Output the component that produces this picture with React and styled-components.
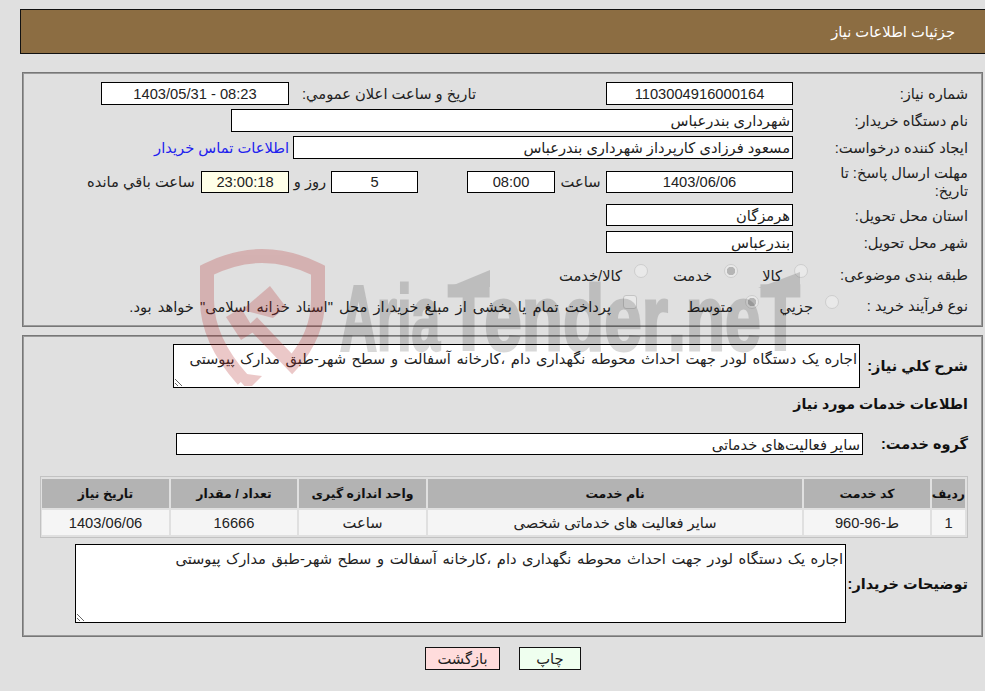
import styled, { createGlobalStyle } from "styled-components";

const GlobalStyle = createGlobalStyle`
    html, body {
        margin: 0;
        background: #E0E0E0;
    }
    * {
        box-sizing: border-box;
    }
`

export default function App () {
    return (
        <>
        <GlobalStyle/>
        <Page>
            <Header>جزئیات اطلاعات نیاز</Header>

            <InfoPanel>
                <Row>
                    <Label>شماره نیاز:</Label>
                    <Field $w={187} $center>1103004916000164</Field>
                    <SideLabel $push={130}>تاریخ و ساعت اعلان عمومي:</SideLabel>
                    <Field $w={188} $center>08:23 - 1403/05/31</Field>
                </Row>
                <Row>
                    <Label>نام دستگاه خریدار:</Label>
                    <Field $w={562}>شهرداری بندرعباس</Field>
                </Row>
                <Row>
                    <Label>ایجاد کننده درخواست:</Label>
                    <Field $w={500}>مسعود فرزادی کارپرداز شهرداری بندرعباس</Field>
                    <ContactLink href="#">اطلاعات تماس خریدار</ContactLink>
                </Row>
                <DeadlineRow>
                    <Label>مهلت ارسال پاسخ: تا<br/>تاریخ:</Label>
                    <Field $w={187} $h={22} $center>1403/06/06</Field>
                    <Hint $w={51}>ساعت</Hint>
                    <Field $w={88} $h={22} $center>08:00</Field>
                    <Spacer $w={49}/>
                    <Field $w={87} $h={22} $center>5</Field>
                    <Hint $w={42}>روز و</Hint>
                    <Field $w={88} $h={22} $center $tint>23:00:18</Field>
                    <Hint $w={120}>ساعت باقي مانده</Hint>
                </DeadlineRow>
                <Row>
                    <Label>استان محل تحویل:</Label>
                    <Field $w={187} $h={22}>هرمزگان</Field>
                </Row>
                <Row>
                    <Label>شهر محل تحویل:</Label>
                    <Field $w={187} $h={22}>بندرعباس</Field>
                </Row>
                <OptionRow $h={30}>
                    <Label $w={160}>طبقه بندی موضوعی:</Label>
                    <Option $w={70}><Radio type="radio" disabled/>کالا</Option>
                    <Option $w={90}><Radio type="radio" disabled defaultChecked/>خدمت</Option>
                    <Option $w={100}><Radio type="radio" disabled/>کالا/خدمت</Option>
                </OptionRow>
                <OptionRow $h={24}>
                    <Label $w={129}>نوع فرآیند خرید :</Label>
                    <Option $w={80}><Radio type="radio" disabled/>جزیي</Option>
                    <Option $w={122}><Radio type="radio" disabled defaultChecked/>متوسط</Option>
                    <Option>
                        <Check type="checkbox" disabled/>
                        <Note>پرداخت تمام یا بخشی از مبلغ خرید،از محل "اسناد خزانه اسلامی" خواهد بود.</Note>
                    </Option>
                </OptionRow>
            </InfoPanel>

            <DetailPanel>
                <TextRow>
                    <StrongLabel $w={108}>شرح کلي نیاز:</StrongLabel>
                    <Description $w={687} $h={44} readOnly defaultValue="اجاره یک دستگاه لودر جهت احداث محوطه نگهداری دام ،کارخانه آسفالت و سطح شهر-طبق مدارک پیوستی"/>
                </TextRow>
                <SectionTitle>اطلاعات خدمات مورد نیاز</SectionTitle>
                <GroupRow>
                    <StrongLabel $w={105}>گروه خدمت:</StrongLabel>
                    <Field $w={687} $h={22}>سایر فعالیت‌های خدماتی</Field>
                </GroupRow>
                <TableFrame>
                    <ServicesTable>
                        <colgroup>
                            <col width="33"/>
                            <col width="126"/>
                            <col width="374"/>
                            <col width="127"/>
                            <col width="126"/>
                            <col width="127"/>
                        </colgroup>
                        <thead>
                            <tr>
                                <th>ردیف</th>
                                <th>کد خدمت</th>
                                <th>نام خدمت</th>
                                <th>واحد اندازه گیری</th>
                                <th>تعداد / مقدار</th>
                                <th>تاریخ نیاز</th>
                            </tr>
                        </thead>
                        <tbody>
                            <tr>
                                <td>1</td>
                                <td>ط-96-960</td>
                                <td>سایر فعالیت های خدماتی شخصی</td>
                                <td>ساعت</td>
                                <td>16666</td>
                                <td>1403/06/06</td>
                            </tr>
                        </tbody>
                    </ServicesTable>
                </TableFrame>
                <BuyerRow>
                    <StrongLabel $w={122}>توضیحات خریدار:</StrongLabel>
                    <Description $w={771} $h={79} readOnly defaultValue="اجاره یک دستگاه لودر جهت احداث محوطه نگهداری دام ،کارخانه آسفالت و سطح شهر-طبق مدارک پیوستی"/>
                </BuyerRow>
            </DetailPanel>

            <Actions>
                <ActionButton $bg="#EFFFEF" $w={62}>چاپ</ActionButton>
                <ActionButton $bg="#FFDCDC" $w={75}>بازگشت</ActionButton>
            </Actions>

            <Watermark viewBox="0 0 985 386" aria-hidden="true">
                <ShieldGroup>
                    <Shield d="M252 322 L292 364 Q318 335 318 300 L318 270 Q290 256 262 256 Q235 256 207 270 L207 300 Q207 340 243 380"/>
                    <polygon points="232,372 262,376 248,390"/>
                    <polygon points="242,310 270,286 286,307 273,318"/>
                    <polygon points="226,317 241,308 255,331 241,340"/>
                </ShieldGroup>
                <BrandGroup>
                    <Brand x="340" y="350" textLength="100" lengthAdjust="spacingAndGlyphs">Aria</Brand>
                    <Brand x="448" y="350" textLength="220" lengthAdjust="spacingAndGlyphs">Tender</Brand>
                    <Brand x="668" y="350" textLength="132" lengthAdjust="spacingAndGlyphs">.neT</Brand>
                    <polygon points="449,287 490,270 490,287"/>
                    <polygon points="758,288 800,272 800,288"/>
                </BrandGroup>
            </Watermark>
        </Page>
        </>
    )
}

const Page = styled.div`
    position: relative;
    direction: rtl;
    width: 985px;
    height: 691px;
    padding-top: 9px;
    overflow: hidden;
    font-family: "Liberation Sans", "DejaVu Sans", sans-serif;
    font-size: 14.7px;
    color: #222222;
`
const Header = styled.div`
    display: flex;
    align-items: center;
    height: 45px;
    margin-left: 20px;
    padding: 0 30px 0 0;
    background: #8C6D42;
    border: 1px solid #111111;
    border-right: none;
    color: #FFFFFF;
`
const InfoPanel = styled.div`
    display: flex;
    flex-direction: column;
    gap: 4px;
    height: 255px;
    margin: 18px 2px 0 22px;
    padding: 9px 14px 0 0;
    border: 1px solid #777777;
    box-shadow: 0 0 0 1px #9A9A9A inset;
`
const Row = styled.div`
    display: flex;
    align-items: center;
    height: 23px;
`
const Label = styled.div`
    flex: none;
    width: ${p => p.$w || 175}px;
    line-height: 18px;
    white-space: nowrap;
`
const SideLabel = styled.div`
    flex: none;
    width: 187px;
    margin-right: ${p => p.$push}px;
    white-space: nowrap;
`
const Hint = styled.div`
    flex: none;
    width: ${p => p.$w}px;
    text-align: center;
    white-space: nowrap;
`
const Spacer = styled.div`
    flex: none;
    width: ${p => p.$w}px;
`
const Field = styled.div`
    flex: none;
    align-self: flex-start;
    display: flex;
    align-items: center;
    justify-content: ${p => p.$center ? "center" : "flex-start"};
    width: ${p => p.$w}px;
    height: ${p => p.$h || 23}px;
    padding: 0 2px;
    overflow: hidden;
    background: ${p => p.$tint ? "#FFFFE8" : "#FFFFFF"};
    border: 1px solid #000000;
    white-space: nowrap;
`
const DeadlineRow = styled(Row)`
    height: 37px;
    ${Field} {
        align-self: center;
    }
`
const OptionRow = styled(Row)`
    height: ${p => p.$h}px;
    padding-top: 4px;
`
const ContactLink = styled.a`
    margin-right: 4px;
    color: #2222EE;
    text-decoration: none;
    white-space: nowrap;
`
const Option = styled.label`
    flex: none;
    display: flex;
    align-items: center;
    width: ${p => p.$w ? `${p.$w}px` : "auto"};
    gap: 12px;
    white-space: nowrap;
`
const Note = styled.span`
    word-spacing: 2px;
`
const Radio = styled.input`
    appearance: none;
    flex: none;
    width: 14px;
    height: 14px;
    margin: -8px 0 0 0;
    background: #E9E9E9;
    border: 1px solid #CDCDCD;
    border-radius: 50%;
    &:checked {
        background: radial-gradient(circle, #B5B5B5 0 4px, #E9E9E9 4.5px);
    }
`
const Check = styled.input`
    appearance: none;
    flex: none;
    width: 14px;
    height: 14px;
    margin: -8px 0 0 0;
    background: #E9E9E9;
    border: 1px solid #C4C4C4;
    border-radius: 3px;
`
const DetailPanel = styled.div`
    height: 302px;
    margin: 8px 2px 0 22px;
    padding: 8px 14px 0 0;
    border: 1px solid #777777;
    box-shadow: 0 0 0 1px #9A9A9A inset;
`
const TextRow = styled.div`
    display: flex;
    align-items: center;
`
const StrongLabel = styled.div`
    flex: none;
    width: ${p => p.$w}px;
    font-size: 14.5px;
    font-weight: bold;
    color: #111111;
    white-space: nowrap;
`
const Description = styled.textarea`
    display: block;
    flex: none;
    width: ${p => p.$w}px;
    height: ${p => p.$h}px;
    padding: 5px 2px 2px;
    background: #FFFFFF;
    border: 1px solid #000000;
    border-radius: 0;
    outline: none;
    font: inherit;
    word-spacing: 1.5px;
    color: inherit;
`
const SectionTitle = styled.div`
    margin-top: 6px;
    height: 22px;
    line-height: 20px;
    font-size: 14.2px;
    font-weight: bold;
    color: #111111;
`
const GroupRow = styled(TextRow)`
    margin-top: 17px;
    ${Field} {
        align-self: center;
    }
`
const TableFrame = styled.div`
    width: 928px;
    margin-top: 21px;
    border: 1px solid #C2C2C2;
`
const ServicesTable = styled.table`
    width: 100%;
    table-layout: fixed;
    border-collapse: separate;
    border-spacing: 2px;
    text-align: center;
    th {
        height: 29px;
        padding: 0;
        background: #B3B3B3;
        font-size: 12.5px;
        color: #111111;
    }
    td {
        height: 25px;
        padding: 0;
        background: #F5F5F5;
    }
`
const BuyerRow = styled(TextRow)`
    margin-top: 6px;
`
const Actions = styled.div`
    display: flex;
    justify-content: center;
    gap: 19px;
    margin: 10px 0 0 21px;
`
const ActionButton = styled.button`
    width: ${p => p.$w}px;
    height: 23px;
    padding: 0;
    background: ${p => p.$bg};
    border: 1px solid #111111;
    border-radius: 0;
    font: inherit;
    color: inherit;
`
const Watermark = styled.svg`
    position: absolute;
    top: 0;
    left: 0;
    width: 985px;
    height: 386px;
    pointer-events: none;
`
const ShieldGroup = styled.g`
    fill: #B42828;
    opacity: 0.25;
`
const Shield = styled.path`
    fill: none;
    stroke: #B42828;
    stroke-width: 14;
`
const BrandGroup = styled.g`
    fill: #000000;
    opacity: 0.15;
`
const Brand = styled.text`
    direction: ltr;
    font-family: "Liberation Sans", sans-serif;
    font-size: 92px;
    font-weight: bold;
    stroke: #000000;
    stroke-width: 3;
`
